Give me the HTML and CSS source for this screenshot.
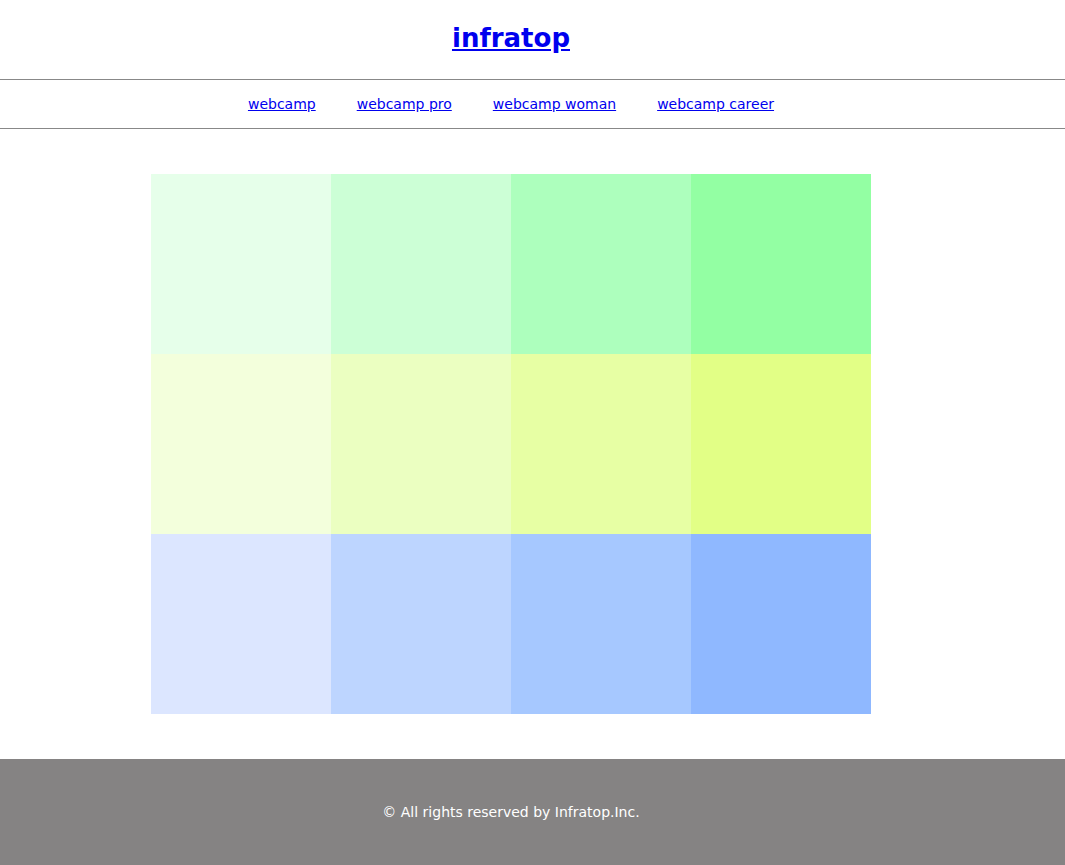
FILE: index.html
```html
<!DOCTYPE html>
<html lang="ja">
<head>
<meta charset="utf-8">
<title>infratop</title>
<link rel="stylesheet" href="styles.css">
</head>
<body>
<header class="site-header">
  <h1 class="logo"><a href="#">infratop</a></h1>
</header>
<nav class="site-nav">
  <ul class="nav-list">
    <li><a href="#">webcamp</a></li>
    <li><a href="#">webcamp pro</a></li>
    <li><a href="#">webcamp woman</a></li>
    <li><a href="#">webcamp career</a></li>
  </ul>
</nav>
<main class="content">
  <div class="tiles">
    <div class="tile g1"></div>
    <div class="tile g2"></div>
    <div class="tile g3"></div>
    <div class="tile g4"></div>
    <div class="tile y1"></div>
    <div class="tile y2"></div>
    <div class="tile y3"></div>
    <div class="tile y4"></div>
    <div class="tile b1"></div>
    <div class="tile b2"></div>
    <div class="tile b3"></div>
    <div class="tile b4"></div>
  </div>
</main>
<footer class="site-footer">
  <p class="copy">© All rights reserved by Infratop.Inc.</p>
</footer>
</body>
</html>
```
FILE: styles.css
```css
html, body {
  margin: 0;
  padding: 0;
}
body {
  font-family: "DejaVu Sans", Verdana, sans-serif;
  background: #fff;
  color: #000;
}
a {
  color: #0000ee;
}
.site-header {
  height: 80px;
  display: flex;
  justify-content: center;
  align-items: center;
  border-bottom: 1px solid #888;
  box-sizing: border-box;
  padding-right: 43px;
}
.logo {
  margin: 0 0 4px 0;
  font-size: 26px;
  font-weight: bold;
}
.site-nav {
  height: 48px;
  border-bottom: 1px solid #888;
  display: flex;
  align-items: center;
  justify-content: center;
  padding-right: 43px;
}
.nav-list {
  list-style: none;
  margin: 0;
  padding: 0;
  display: flex;
  gap: 41px;
  font-size: 14px;
}
.content {
  padding: 45px 43px 45px 0;
  display: flex;
  justify-content: center;
}
.tiles {
  display: grid;
  grid-template-columns: repeat(4, 180px);
  grid-auto-rows: 180px;
}
.g1 { background: #e6ffea; }
.g2 { background: #ccffd6; }
.g3 { background: #adffbd; }
.g4 { background: #93ffa3; }
.y1 { background: #f3ffdc; }
.y2 { background: #ebffc1; }
.y3 { background: #e7ffa4; }
.y4 { background: #e2ff86; }
.b1 { background: #dce6ff; }
.b2 { background: #bdd5ff; }
.b3 { background: #a6c8ff; }
.b4 { background: #8fb8ff; }
.site-footer {
  background: #858383;
  height: 106px;
  display: flex;
  align-items: center;
  justify-content: center;
  padding-right: 43px;
}
.copy {
  margin: 0;
  color: #fff;
  font-size: 14px;
}
```
